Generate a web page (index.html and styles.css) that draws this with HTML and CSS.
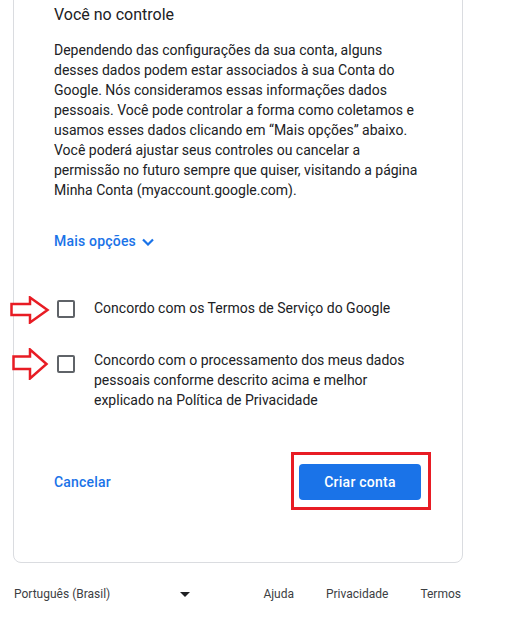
FILE: index.html
```html
<!DOCTYPE html>
<html lang="pt-BR">
<head>
    <meta charset="UTF-8">
    <meta name="viewport" content="width=device-width, initial-scale=1.0">
    <title>Criar sua Conta do Google</title>
    <link rel="stylesheet" href="styles.css">
</head>
<body>
    <div class="card">
        <h2 class="title">Você no controle</h2>
        <p class="text">Dependendo das configurações da sua conta, alguns desses dados podem estar associados à sua Conta do Google. Nós consideramos essas informações dados pessoais. Você pode controlar a forma como coletamos e usamos esses dados clicando em “Mais opções” abaixo. Você poderá ajustar seus controles ou cancelar a permissão no futuro sempre que quiser, visitando a página Minha Conta (myaccount.google.com).</p>

        <a class="more" href="#">Mais opções
            <svg width="12" height="8" viewBox="0 0 12 8"><path d="M1 1.5 6 6.5 11 1.5" fill="none" stroke="#1a73e8" stroke-width="2.2"/></svg>
        </a>

        <label class="check-row first">
            <svg class="arrow arrow-one" width="40" height="28" viewBox="0 0 40 28"><polygon points="1.5,8 20,8 20,1.5 37.5,14 20,26.5 20,19 1.5,19" fill="#fff" stroke="#e81c24" stroke-width="2.5"/></svg>
            <span class="box"></span>
            <span class="label">Concordo com os Termos de Serviço do Google</span>
        </label>

        <label class="check-row second">
            <svg class="arrow arrow-two" width="37" height="32" viewBox="0 0 37 32"><polygon points="1.5,8.5 18,8.5 18,1.5 34.5,16 18,30.5 18,21 1.5,21" fill="#fff" stroke="#e81c24" stroke-width="2.5"/></svg>
            <span class="box"></span>
            <span class="label">Concordo com o processamento dos meus dados pessoais conforme descrito acima e melhor explicado na Política de Privacidade</span>
        </label>

        <div class="actions">
            <a class="cancel" href="#">Cancelar</a>
            <div class="submit-wrap">
                <span class="highlight"></span>
                <button class="submit">Criar conta</button>
            </div>
        </div>
    </div>

    <footer class="footer">
        <div class="lang">
            <span>Português (Brasil)</span>
            <span class="caret"></span>
        </div>
        <nav class="links">
            <a href="#">Ajuda</a>
            <a href="#">Privacidade</a>
            <a href="#">Termos</a>
        </nav>
    </footer>
</body>
</html>
```

FILE: styles.css
```css
body {
    margin: 0;
    font-family: Roboto, "Liberation Sans", Arial, sans-serif;
    color: #202124;
    background-color: #fff;
}

.card {
    width: 450px;
    box-sizing: border-box;
    margin: -20px 0 0 13px;
    padding: 22px 40px 62px;
    border: 1px solid #dadce0;
    border-radius: 8px;
}

.title {
    margin: 0;
    font-size: 16px;
    font-weight: 400;
    line-height: 24px;
    color: #202124;
}

.text {
    margin: 13px 0 0;
    font-size: 14px;
    line-height: 20px;
    color: #202124;
}

.more {
    display: flex;
    align-items: center;
    gap: 6px;
    margin-top: 31px;
    font-size: 14px;
    font-weight: 500;
    line-height: 20px;
    color: #1a73e8;
    text-decoration: none;
    letter-spacing: 0.2px;
}

.more svg {
    margin-top: 1px;
}

.check-row {
    position: relative;
    display: flex;
    align-items: flex-start;
    font-size: 14px;
    line-height: 20px;
    color: #202124;
}

.check-row.first {
    margin-top: 47px;
}

.check-row.second {
    margin-top: 32px;
}

.box {
    flex: none;
    width: 18px;
    height: 18px;
    box-sizing: border-box;
    margin: 2px 19px 0 3px;
    border: 2px solid #5f6368;
    border-radius: 2px;
}

.second .box {
    margin-top: 5px;
}

.arrow {
    position: absolute;
}

.arrow-one {
    left: -44px;
    top: -2px;
}

.arrow-two {
    left: -42px;
    top: -2px;
}

.actions {
    display: flex;
    align-items: center;
    justify-content: space-between;
    margin-top: 54px;
}

.cancel {
    font-size: 14px;
    font-weight: 500;
    color: #1a73e8;
    text-decoration: none;
    letter-spacing: 0.2px;
}

.submit-wrap {
    position: relative;
    margin-right: 1px;
}

.highlight {
    position: absolute;
    left: -8px;
    top: -12px;
    right: -10px;
    bottom: -10px;
    border: 3px solid #e81c24;
}

.submit {
    position: relative;
    display: block;
    width: 122px;
    height: 36px;
    border: none;
    border-radius: 4px;
    background-color: #1a73e8;
    color: #fff;
    font-family: Roboto, "Liberation Sans", Arial, sans-serif;
    font-size: 14px;
    font-weight: 500;
    letter-spacing: 0.25px;
}

.footer {
    display: flex;
    align-items: center;
    margin-top: 23px;
    padding: 0 46px 0 14px;
    font-size: 12px;
    line-height: 16px;
    color: #3c4043;
}

.lang {
    display: flex;
    align-items: center;
    justify-content: space-between;
    width: 176px;
}

.caret {
    width: 0;
    height: 0;
    border-left: 5px solid transparent;
    border-right: 5px solid transparent;
    border-top: 5px solid #202124;
}

.links {
    display: flex;
    gap: 32px;
    margin-left: auto;
}

.links a {
    color: #3c4043;
    text-decoration: none;
}
```
